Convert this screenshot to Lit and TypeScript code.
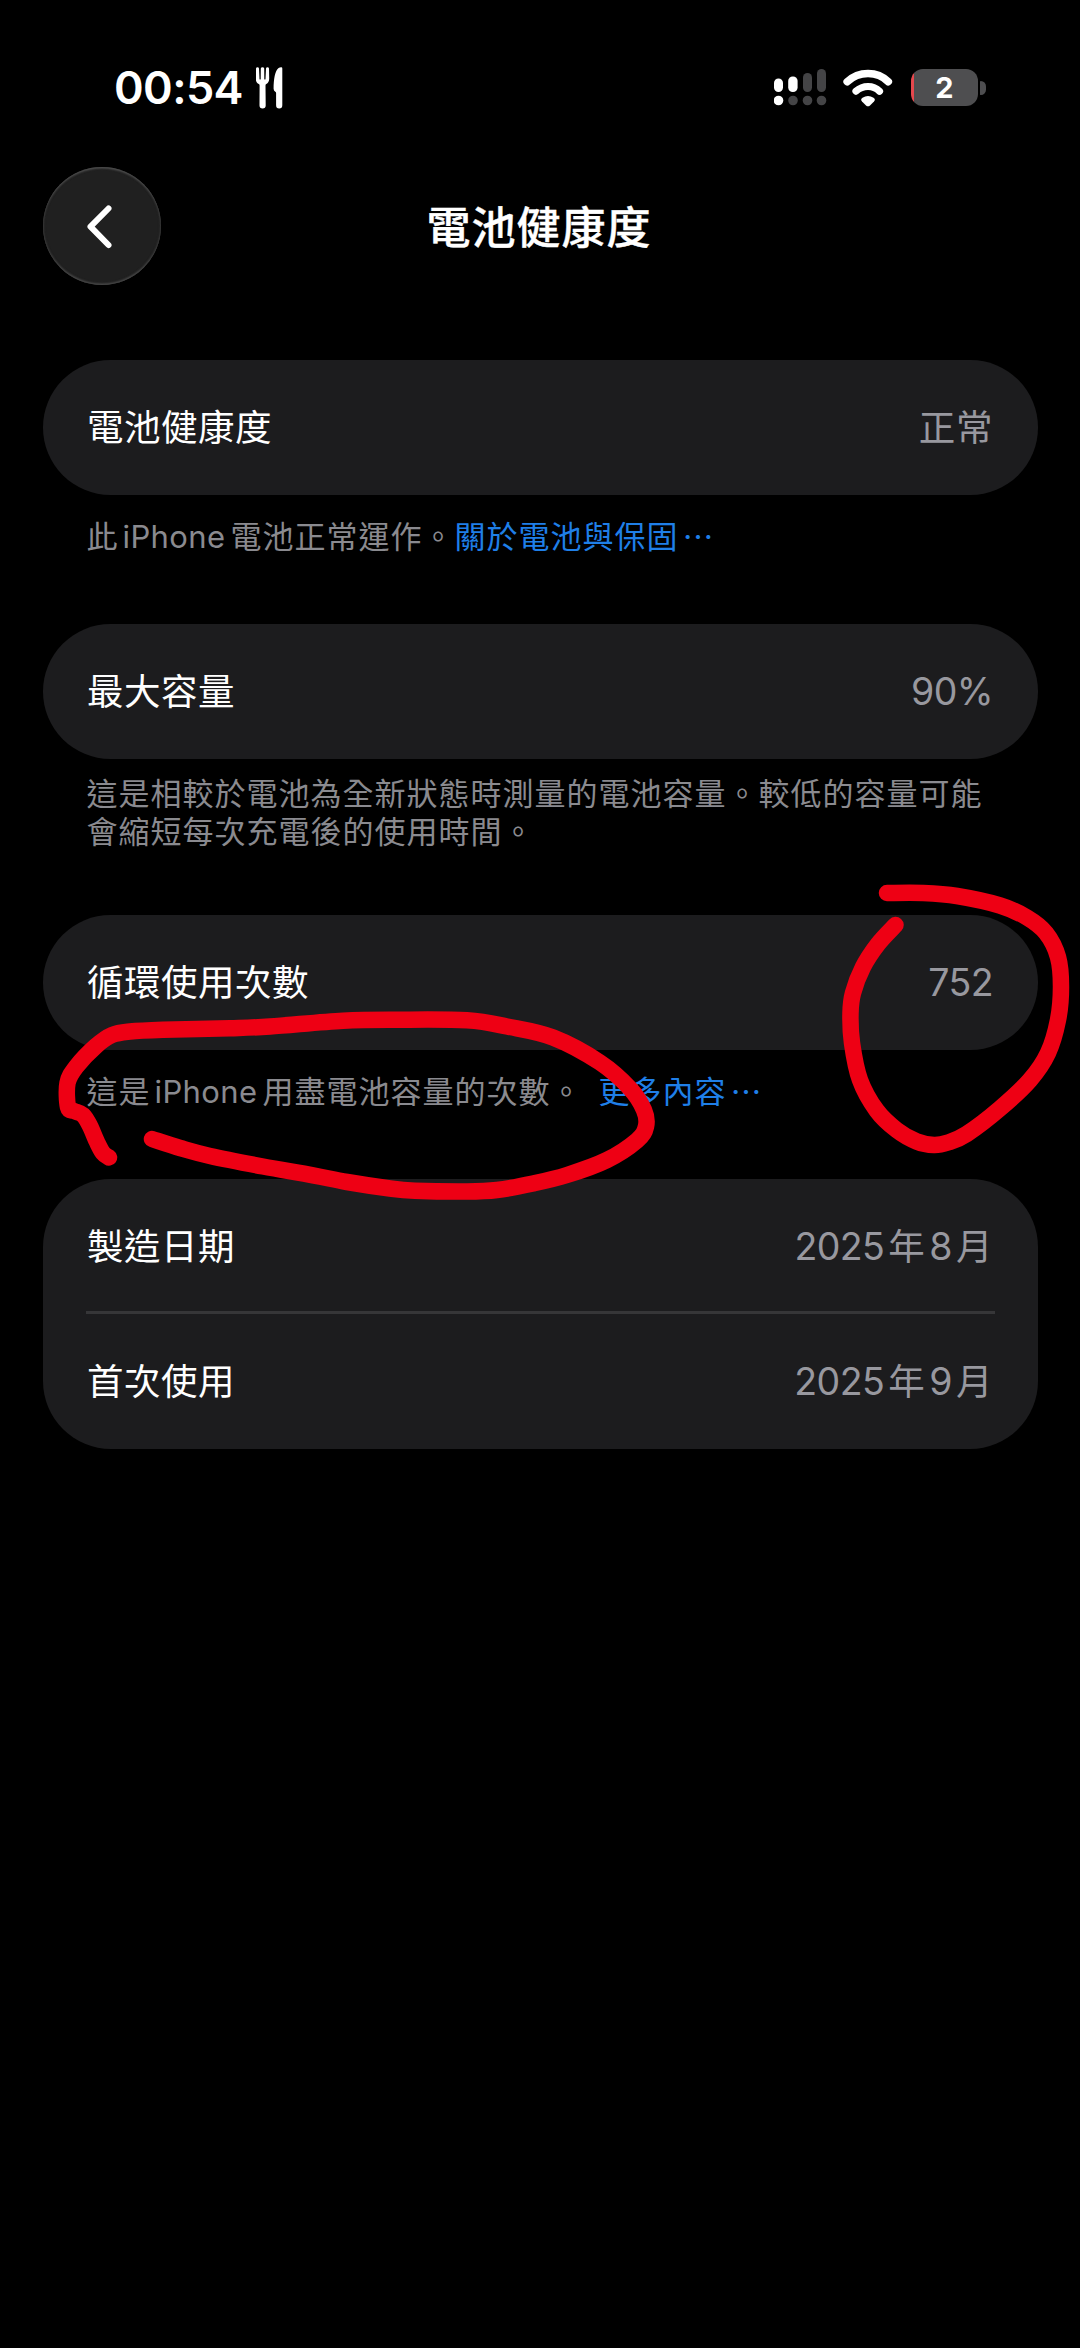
import { LitElement, html, svg, css } from "lit";
import { customElement, property } from "lit/decorators.js";

type Point = [number, number];

interface Row {
  label: string;
  value: string;
}

/** Smooth curve through the points (Catmull-Rom converted to cubic segments). */
function smoothPath(points: Point[]): string {
  let d = `M${points[0][0]} ${points[0][1]}`;
  for (let i = 0; i < points.length - 1; i++) {
    const p0 = points[Math.max(i - 1, 0)];
    const p1 = points[i];
    const p2 = points[i + 1];
    const p3 = points[Math.min(i + 2, points.length - 1)];
    const c1x = p1[0] + (p2[0] - p0[0]) / 6;
    const c1y = p1[1] + (p2[1] - p0[1]) / 6;
    const c2x = p2[0] - (p3[0] - p1[0]) / 6;
    const c2y = p2[1] - (p3[1] - p1[1]) / 6;
    d += `C${c1x.toFixed(1)} ${c1y.toFixed(1)} ${c2x.toFixed(1)} ${c2y.toFixed(1)} ${p2[0]} ${p2[1]}`;
  }
  return d;
}

const FOOTNOTE_LOOP: Point[] = [
  [109, 1157.5], [103, 1153], [97, 1142], [90, 1126], [83, 1115], [74, 1111], [68, 1107],
  [67.5, 1083], [76, 1067], [96, 1046], [112, 1035], [130, 1031.5], [163, 1029.7],
  [230, 1028.2], [270, 1026.5], [343, 1020.7], [400, 1019.7], [467, 1020.3], [507, 1026.5],
  [553, 1037.5], [600, 1062.5], [630, 1088.5], [644, 1110], [646, 1126.5], [637, 1140.5],
  [607, 1160], [567, 1175], [533, 1183.5], [497, 1190], [467, 1191.5], [415, 1190.7],
  [390, 1188.5], [347, 1182], [313, 1175.3], [263, 1166.5], [210, 1156], [180, 1148], [152, 1139],
];

const COUNT_LOOP: Point[] = [
  [887, 893], [923, 893], [957, 896], [1000, 905.5], [1027, 917.5], [1046, 933],
  [1058, 957], [1061, 986.7], [1058, 1020], [1048, 1053], [1030, 1080], [1000, 1108.5],
  [966.7, 1134], [948, 1142.5], [934, 1145], [916.7, 1141.5], [896.7, 1130], [876.7, 1110.5],
  [860, 1080], [852, 1043], [850.5, 1013], [853, 993], [863, 967], [878, 944], [895.5, 925],
];

@customElement("status-bar")
class StatusBar extends LitElement {
  static styles = css`
    :host {
      display: flex;
      height: 117px;
      align-items: center;
      justify-content: space-between;
      padding: 58px 94px 0 114px;
      box-sizing: border-box;
      color: #fff;
    }
    .side {
      display: flex;
      align-items: center;
    }
    .time {
      font-size: 45px;
      line-height: 60px;
      font-weight: 600;
      letter-spacing: -0.6px;
      width: 142px;
      white-space: nowrap;
    }
    .cutlery {
      width: 27px;
      height: 42px;
    }
    .signal {
      width: 53px;
      height: 38px;
      margin-right: 16px;
    }
    .wifi {
      width: 50px;
      height: 38px;
      margin-right: 18px;
    }
    .battery {
      display: flex;
      align-items: center;
      gap: 2px;
    }
    .cell {
      display: grid;
      place-items: center;
      width: 67px;
      height: 37px;
      border-radius: 12px;
      background: linear-gradient(90deg, #e5484d 0 3.5px, #4e4e50 3.5px);
      font-size: 29px;
      line-height: 37px;
      font-weight: 700;
    }
    .nub {
      width: 6px;
      height: 14px;
      border-radius: 1px 6px 6px 1px;
      background: #4e4e50;
    }
  `;

  render() {
    return html`
      <div class="side">
        <span class="time">00:54</span>
        <svg class="cutlery" viewBox="0 0 27 42" fill="#fff">
          <path d="M0 1.500Q0.200 0.200 1.500 0.200T3 1.500L3.500 12q.1.6.6.6t.6-.6L4.800 1.500Q5 0.200 6.500 0.200T8.200 1.500L8.300 12q.1.6.6.6t.6-.6L10 1.500Q10.200 0.200 11.500 0.200T13 1.500L13.200 11.500C13.200 14.500 12 16 10.300 17q-.8.5-.8 1.400L9.700 38.600q0 2.900-3.100 2.900t-3.100-2.900L3.600 18.400q0-.9-.8-1.400C1 16 -.2 14.500 -.2 11.500z" />
          <path d="M25.300.2q1 .1 1 1.300V38.300q0 3.200-3.100 3.200t-3.100-3.200V26q0-.8-.8-1.200-1.700-.8-1.700-3C17.600 12.500 19 3.500 22.600 1q1.400-.9 2.700-.8z" />
        </svg>
      </div>
      <div class="side">
        <svg class="signal" viewBox="0 0 53 38">
          <g fill="#fff">
            <rect x="0" y="9.500" width="9" height="13.500" rx="4.500" />
            <rect x="14.200" y="7.500" width="9.400" height="15.500" rx="4.500" />
            <circle cx="4.500" cy="31.500" r="4.800" />
          </g>
          <g fill="#444446">
            <rect x="29" y="4" width="9" height="19" rx="4.500" />
            <rect x="43" y="0" width="9" height="23" rx="4.500" />
            <circle cx="19" cy="31.500" r="4.800" />
            <circle cx="33.500" cy="31.500" r="4.800" />
            <circle cx="47.500" cy="31.500" r="4.800" />
          </g>
        </svg>
        <svg class="wifi" viewBox="0 0 50 38">
          <g fill="none" stroke="#fff" stroke-linecap="round">
            <path d="M4.200 12.700Q13 4.500 25 4.500T45.300 12.700" stroke-width="7.600" />
            <path d="M13 22.200Q18.200 17.500 25 17.500T36.500 22.200" stroke-width="7.200" />
          </g>
          <path d="M19 32.500q-2-2 .5-3.800 5.500-3.400 11 0 2.500 1.800.5 3.800l-4 3.900q-2 1.700-4 0z" fill="#fff" />
        </svg>
        <div class="battery">
          <div class="cell">2</div>
          <div class="nub"></div>
        </div>
      </div>
    `;
  }
}

@customElement("nav-header")
class NavHeader extends LitElement {
  static styles = css`
    :host {
      display: grid;
      grid-template-columns: 118px 1fr 118px;
      align-items: center;
      margin: 50px 43px 0;
      height: 118px;
    }
    .back {
      display: grid;
      place-items: center;
      width: 118px;
      height: 118px;
      box-sizing: border-box;
      border: 0;
      padding: 0;
      border-radius: 50%;
      background: #202020;
      box-shadow: inset 0 2px 2px -0.5px #4c4c4c, inset 0 -2px 2px -0.5px #464646, inset 0 0 2px 1px #2c2c2c;
    }
    .chevron {
      width: 118px;
      height: 118px;
    }
    .title {
      margin: 0;
      padding: 3px 2px 0 0;
      text-align: center;
      font-size: 44px;
      line-height: 60px;
      letter-spacing: 1px;
      font-weight: 500;
      color: #fff;
      -webkit-text-stroke: 0.4px #fff;
    }
  `;

  @property() heading = "";

  render() {
    return html`
      <button class="back" aria-label="返回">
        <svg class="chevron" viewBox="0 0 118 118" fill="none" stroke="#fff" stroke-width="6" stroke-linecap="round" stroke-linejoin="round">
          <path d="M65.500 41.500L47.500 59.700L65.500 78" />
        </svg>
      </button>
      <h1 class="title">${this.heading}</h1>
    `;
  }
}

@customElement("setting-card")
class SettingCard extends LitElement {
  static styles = css`
    :host {
      display: block;
      background: #1c1c1e;
      border-radius: 68px;
      padding: 0 43px;
    }
    .row {
      display: flex;
      align-items: center;
      justify-content: space-between;
      height: 135px;
      box-sizing: border-box;
      font-size: 36.500px;
      line-height: 50px;
    }
    .row + .row {
      border-top: 3px solid #363638;
      margin-top: -3px;
      height: 138px;
    }
    .label {
      color: #fff;
      letter-spacing: 0.5px;
      margin-left: 1px;
    }
    .value {
      display: flex;
      gap: 4px;
      color: #98989f;
      margin-right: 2px;
    }
    .num {
      font-size: 37.500px;
      letter-spacing: -0.6px;
    }
    .han {
      letter-spacing: 0.6px;
    }
  `;

  @property({ attribute: false }) rows: Row[] = [];

  private renderValue(value: string) {
    return value
      .split(/([0-9%]+)/)
      .filter(Boolean)
      .map((part) => html`<span class=${/[0-9]/.test(part) ? "num" : "han"}>${part}</span>`);
  }

  render() {
    return this.rows.map(
      (row) => html`
        <div class="row">
          <span class="label">${row.label}</span>
          <span class="value">${this.renderValue(row.value)}</span>
        </div>
      `,
    );
  }
}

@customElement("app-root")
class AppRoot extends LitElement {
  static styles = css`
    :host {
      display: block;
      position: relative;
      width: 1080px;
      height: 2348px;
      overflow: hidden;
      background: #000;
      font-family: Inter, "Noto Sans CJK TC", sans-serif;
    }
    .content {
      display: flex;
      flex-direction: column;
      padding: 75px 42px 0 43px;
    }
    .note {
      margin: 0;
      box-sizing: border-box;
      padding: 0 43px 0 43.5px;
      font-size: 31px;
      line-height: 38px;
      letter-spacing: 1px;
      color: #8a8a8f;
      white-space: nowrap;
    }
    .health {
      height: 129px;
      padding-top: 21px;
    }
    .capacity {
      height: 156px;
      padding-top: 16px;
    }
    .cycles {
      height: 129px;
      padding-top: 21px;
    }
    .latin {
      margin: 0 5px 0 4px;
      letter-spacing: 0.4px;
    }
    .link {
      color: #1f7fe8;
      text-decoration: none;
    }
    .spaced {
      margin-left: 16px;
    }
    .dots {
      margin-left: 4px;
      letter-spacing: 0;
      font-family: "Noto Sans CJK TC", sans-serif;
    }
    .markup {
      position: absolute;
      left: 0;
      top: 0;
      width: 1080px;
      height: 2348px;
      pointer-events: none;
    }
  `;

  render() {
    return html`
      <status-bar></status-bar>
      <nav-header heading="電池健康度"></nav-header>
      <main class="content">
        <setting-card .rows=${[{ label: "電池健康度", value: "正常" }]}></setting-card>
        <p class="note health">此<span class="latin">iPhone</span>電池正常運作。<a class="link">關於電池與保固<span class="dots">⋯</span></a></p>
        <setting-card .rows=${[{ label: "最大容量", value: "90%" }]}></setting-card>
        <p class="note capacity">這是相較於電池為全新狀態時測量的電池容量。較低的容量可能<br />會縮短每次充電後的使用時間。</p>
        <setting-card .rows=${[{ label: "循環使用次數", value: "752" }]}></setting-card>
        <p class="note cycles">這是<span class="latin">iPhone</span>用盡電池容量的次數。<a class="link spaced">更多內容<span class="dots">⋯</span></a></p>
        <setting-card
          .rows=${[
            { label: "製造日期", value: "2025年8月" },
            { label: "首次使用", value: "2025年9月" },
          ]}
        ></setting-card>
      </main>
      <svg class="markup" viewBox="0 0 1080 2348" fill="none" stroke="#ee0014" stroke-width="16.500" stroke-linecap="round" stroke-linejoin="round">
        ${[FOOTNOTE_LOOP, COUNT_LOOP].map((loop) => svg`<path d=${smoothPath(loop)} />`)}
      </svg>
    `;
  }
}
